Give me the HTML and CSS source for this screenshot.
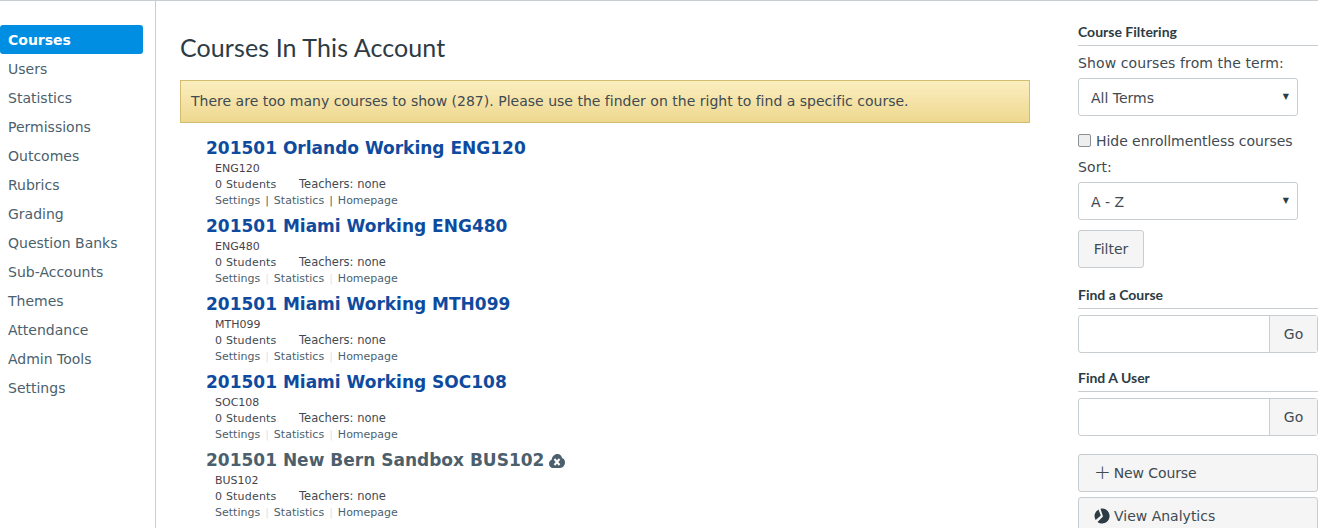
FILE: index.html
```html
<!DOCTYPE html>
<html>
<head>
  <title>Courses In This Account</title>
  <link rel="stylesheet" href="styles.css">
</head>
<body>
  <div class="page">
    <div class="nav">
      <a class="active">Courses</a>
      <a>Users</a>
      <a>Statistics</a>
      <a>Permissions</a>
      <a>Outcomes</a>
      <a>Rubrics</a>
      <a>Grading</a>
      <a>Question Banks</a>
      <a>Sub-Accounts</a>
      <a>Themes</a>
      <a>Attendance</a>
      <a>Admin Tools</a>
      <a>Settings</a>
    </div>

    <div class="main">
      <h1>Courses In This Account</h1>
      <div class="alert">There are too many courses to show (287). Please use the finder on the right to find a specific course.</div>

      <div class="course">
        <h2>201501 Orlando Working ENG120</h2>
        <div class="code">ENG120</div>
        <div class="counts"><span class="students">0 Students</span><span>Teachers: none</span></div>
        <div class="links"><a>Settings</a><i class="dark">|</i><a>Statistics</a><i class="dark">|</i><a>Homepage</a></div>
      </div>
      <div class="course">
        <h2>201501 Miami Working ENG480</h2>
        <div class="code">ENG480</div>
        <div class="counts"><span class="students">0 Students</span><span>Teachers: none</span></div>
        <div class="links"><a>Settings</a><i>|</i><a>Statistics</a><i>|</i><a>Homepage</a></div>
      </div>
      <div class="course">
        <h2>201501 Miami Working MTH099</h2>
        <div class="code">MTH099</div>
        <div class="counts"><span class="students">0 Students</span><span>Teachers: none</span></div>
        <div class="links"><a>Settings</a><i>|</i><a>Statistics</a><i>|</i><a>Homepage</a></div>
      </div>
      <div class="course">
        <h2>201501 Miami Working SOC108</h2>
        <div class="code">SOC108</div>
        <div class="counts"><span class="students">0 Students</span><span>Teachers: none</span></div>
        <div class="links"><a>Settings</a><i>|</i><a>Statistics</a><i>|</i><a>Homepage</a></div>
      </div>
      <div class="course">
        <h2 class="unpublished">201501 New Bern Sandbox BUS102
          <svg class="badge" width="16" height="14" viewBox="0 0 16 14">
            <path fill="#4c5f6d" d="M8.500 0C11 0 12.800 1.700 13 4 14.800 4.500 16 6.300 16 8.300 16 11.300 14 14 11 14H4C1.700 14 0 12 0 9.700 0 7.800 1.100 6.300 2.700 5.700 3 2.500 5.500 0 8.500 0z"/>
            <path stroke="#fff" stroke-width="2" d="M5.500 5l5 6M10.500 5l-5 6"/>
          </svg>
        </h2>
        <div class="code">BUS102</div>
        <div class="counts"><span class="students">0 Students</span><span>Teachers: none</span></div>
        <div class="links"><a>Settings</a><i>|</i><a>Statistics</a><i>|</i><a>Homepage</a></div>
      </div>
    </div>

    <div class="side">
      <h3>Course Filtering</h3>
      <div class="label">Show courses from the term:</div>
      <div class="select">All Terms<span class="arrow">▼</span></div>
      <label class="check"><span class="box"></span>Hide enrollmentless courses</label>
      <div class="label sort">Sort:</div>
      <div class="select">A - Z<span class="arrow">▼</span></div>
      <div class="btn filter">Filter</div>

      <h3 class="find">Find a Course</h3>
      <div class="search"><div class="field"></div><div class="go">Go</div></div>

      <h3 class="find user">Find A User</h3>
      <div class="search"><div class="field"></div><div class="go">Go</div></div>

      <div class="btn wide first"><span class="plus">+</span>New Course</div>
      <div class="btn wide">
        <svg class="pie" width="16" height="16" viewBox="0 0 16 16">
          <path fill="#2d3b45" d="M6.500.700A7.500 7.500 0 1 1 3.500 14L9 8.500z"/>
          <path fill="#2d3b45" d="M4.500 1.400L6.800 7.600 1.700 12A7.500 7.500 0 0 1 4.500 1.400z"/>
        </svg>View Analytics</div>
    </div>
  </div>
</body>
</html>
```

FILE: styles.css
```css
html, body {
  margin: 0;
  height: 528px;
  overflow: hidden;
}
body {
  font-family: "DejaVu Sans", Verdana, sans-serif;
  font-size: 14px;
  color: #2d3b45;
  background: #fff;
}
.page {
  display: flex;
  width: 1318px;
  height: 527px;
  border-top: 1px solid #c7cdd1;
}

/* left nav */
.nav {
  width: 156px;
  flex: none;
  box-sizing: border-box;
  padding-top: 24px;
  border-right: 1px solid #c7cdd1;
}
.nav a {
  display: block;
  width: 143px;
  box-sizing: border-box;
  height: 29px;
  line-height: 31px;
  padding-left: 8px;
  color: #4c5f6d;
  border-radius: 3px;
}
.nav a.active {
  background: #008ee2;
  color: #fff;
  font-weight: bold;
}

/* course list */
.main {
  width: 850px;
  margin-left: 24px;
  flex: none;
}
h1 {
  font-family: Lato, sans-serif;
  font-weight: 400;
  font-size: 25px;
  letter-spacing: .1px;
  line-height: 30px;
  margin: 31px 0 18px;
}
.alert {
  height: 43px;
  box-sizing: border-box;
  border: 1px solid #d3bc6f;
  background: linear-gradient(#fbeebf, #eed88f);
  padding: 0 10px;
  line-height: 41px;
  letter-spacing: .01px;
  color: #3f4a52;
}
.course {
  height: 78px;
  padding-left: 26px;
  font-size: 11px;
}
.alert + .course {
  margin-top: 12px;
}
.course h2 {
  margin: 0;
  font-size: 17px;
  line-height: 26px;
  font-weight: bold;
  color: #0e4b9e;
}
.course h2.unpublished {
  color: #4c5f6d;
}
.badge {
  vertical-align: -2px;
  margin-left: -1px;
}
.code, .counts, .links {
  padding-left: 9px;
  line-height: 16px;
}
.code {
  height: 15px;
  color: #4a3f4a;
}
.counts {
  font-size: 11.500px;
  color: #3f4a52;
}
.students {
  display: inline-block;
  width: 84px;
  font-size: 11px;
  letter-spacing: .2px;
}
.links {
  color: #4c5f6d;
}
.links i {
  font-style: normal;
  color: #dfe3e6;
  margin: 0 5px;
}
.links i.dark {
  color: #4c5f6d;
}

/* right column */
.side {
  width: 240px;
  flex: none;
  margin-left: 48px;
}
h3 {
  font-family: Lato, sans-serif;
  font-size: 14px;
  font-weight: 700;
  line-height: 16px;
  margin: 23px 0 0;
  padding-bottom: 5px;
  border-bottom: 1px solid #c7cdd1;
}
h3.find {
  margin-top: 19px;
}
h3.user {
  margin-top: 17px;
}
.label {
  color: #3f4a52;
  letter-spacing: .1px;
  line-height: 17px;
  margin-top: 9px;
  margin-bottom: 6px;
}
.label.sort {
  margin-top: 10px;
  margin-bottom: 6px;
}
.select {
  position: relative;
  width: 220px;
  height: 38px;
  box-sizing: border-box;
  border: 1px solid #c7cdd1;
  border-radius: 3px;
  padding-left: 12px;
  line-height: 38px;
  color: #3f4a52;
}
.arrow {
  position: absolute;
  right: 8px;
  top: 0;
  font-size: 8px;
  line-height: 36px;
  color: #2d3b45;
}
.check {
  display: flex;
  align-items: center;
  height: 17px;
  margin-top: 16px;
  letter-spacing: -.05px;
  color: #3f4a52;
}
.box {
  width: 11px;
  height: 11px;
  border: 1px solid #8a8f93;
  border-radius: 2px;
  background: #eee;
  margin-right: 5px;
}
.btn {
  box-sizing: border-box;
  height: 38px;
  line-height: 36px;
  border: 1px solid #c7cdd1;
  border-radius: 3px;
  background: #f5f5f5;
  color: #3f4a52;
}
.filter {
  width: 66px;
  text-align: center;
  line-height: 37px;
  margin-top: 10px;
}
.search {
  display: flex;
  height: 38px;
  margin-top: 6px;
  box-sizing: border-box;
  border: 1px solid #c7cdd1;
  border-radius: 3px;
}
.field {
  flex: 1;
}
.go {
  width: 47px;
  text-align: center;
  line-height: 36px;
  background: #f5f5f5;
  border-left: 1px solid #c7cdd1;
  color: #3f4a52;
}
.wide {
  padding-left: 15px;
  margin-top: 5px;
}
.wide.first {
  margin-top: 18px;
  line-height: 35px;
  letter-spacing: -.1px;
}
.plus {
  font-size: 20px;
  font-weight: 300;
  margin-right: 3px;
  vertical-align: -1px;
}
.pie {
  vertical-align: -3px;
  margin-right: 4px;
}
```
